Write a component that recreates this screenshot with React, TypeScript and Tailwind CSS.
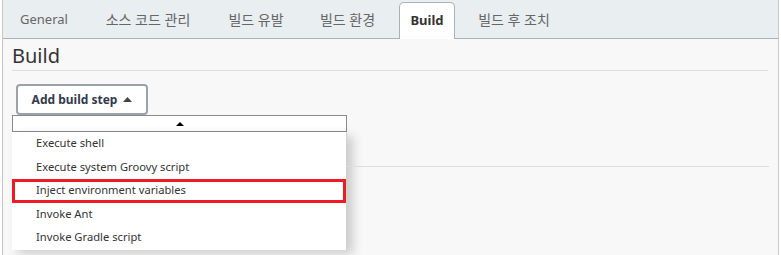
import { ReactNode } from "react";

const font = { fontFamily: '"Noto Sans", "Noto Sans CJK KR", sans-serif' };

const tabs = [
  { label: "General", w: "w-[72px]", size: "text-[13px]" },
  { label: "소스 코드 관리", w: "w-[136px]", size: "text-[14px]" },
  { label: "빌드 유발", w: "w-[80px]", size: "text-[14px]" },
  { label: "빌드 환경", w: "w-[103px]", size: "text-[14px]" },
  { label: "Build", w: "w-[56px]", size: "text-[13px]", active: true },
  { label: "빌드 후 조치", w: "w-[118px]", size: "text-[14px]" },
];

const steps = [
  "Execute shell",
  "Execute system Groovy script",
  "Inject environment variables",
  "Invoke Ant",
  "Invoke Gradle script",
];

function Tab({ label, w, size, active }: { label: string; w: string; size: string; active?: boolean }): ReactNode {
  if (active) {
    return (
      <div
        className={`-mb-px flex h-[37px] ${w} items-center justify-center rounded-t-[5px] border border-b-0 border-[#a9b2b8] bg-white ${size} font-bold text-[#333]`}
      >
        {label}
      </div>
    );
  }
  return <div className={`flex h-[37px] ${w} items-center justify-center ${size} text-[#666]`}>{label}</div>;
}

export default function App() {
  return (
    <div className="h-[255px] w-[781px] overflow-hidden bg-white" style={font}>
      <div className="ml-[2px] h-full w-[777px] border-x border-[#c9c9c9] bg-[#f8f8f8]">
        <div className="flex h-[39px] items-end border-b border-[#a9b2b8] bg-[#e9eef1] pl-[5px]">
          {tabs.map((t) => (
            <Tab key={t.label} {...t} />
          ))}
        </div>

        <div className="px-[9px]">
          <h2 className="pt-[3px] text-[20px] leading-[27px] text-[#333]">Build</h2>
          <div className="mt-[1px] h-px w-[756px] bg-[#dddddd]" />

          <button className="ml-[4px] mt-[13px] flex h-[31px] w-[132px] items-center justify-center gap-[6px] rounded-[4px] border-2 border-[#9aa3ab] bg-white text-[12px] font-bold text-[#333a4d]">
            Add build step
            <svg width="9" height="5" viewBox="0 0 9 5">
              <path d="M0 5 L4.5 0 L9 5 Z" fill="#444" />
            </svg>
          </button>

          <div className="flex">
            <div className="w-[335px] shrink-0">
              <div className="flex h-[17px] items-center justify-center border border-[#8a8a8a] bg-white">
                <svg width="8" height="4" viewBox="0 0 8 4">
                  <path d="M0 4 L4 0 L8 4 Z" fill="#000" />
                </svg>
              </div>
              <ul className="border-r border-[#d0d0d0] bg-white shadow-[6px_4px_10px_rgba(0,0,0,0.18)]">
                {steps.map((s, i) => (
                  <li
                    key={s}
                    className={
                      i === 2
                        ? "flex h-[23.5px] items-center border-[3px] border-[#ed1c24] pl-[21px] text-[11.2px] text-[#333]"
                        : "flex h-[23.5px] items-center pl-[24px] text-[11.2px] text-[#333]"
                    }
                  >
                    {s}
                  </li>
                ))}
              </ul>
            </div>
            <div className="mt-[51px] h-px w-[422px] bg-[#dddddd]" />
          </div>
        </div>
      </div>
    </div>
  );
}
